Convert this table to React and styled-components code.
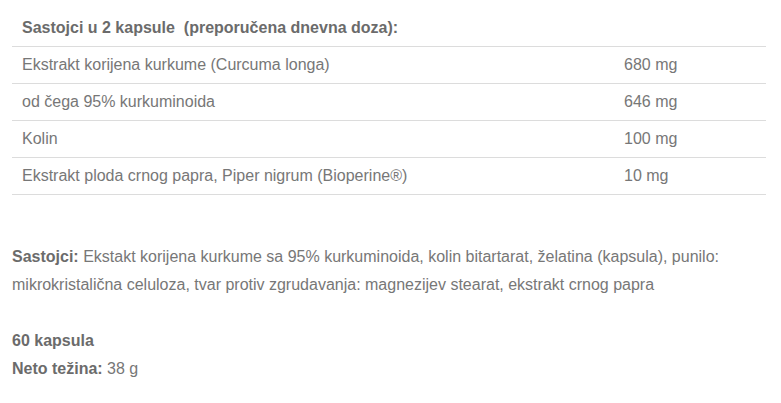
import styled, { createGlobalStyle } from "styled-components";

const GlobalStyle = createGlobalStyle`
  html, body {
    margin: 0;
    padding: 0;
    background: #fff;
  }
  body {
    font-family: "Liberation Sans", Arial, sans-serif;
    font-size: 16px;
    color: #777;
  }
`;

const Wrapper = styled.div`
  padding: 10px 15px 0 12px;
`;

const Table = styled.table`
  width: 754px;
  border-collapse: collapse;
  margin-bottom: 48px;
`;

const HeadCell = styled.th`
  text-align: left;
  font-weight: 700;
  color: #6b6b6b;
  padding: 0 10px;
  height: 36px;
  border-bottom: 1px solid #dcdcdc;
`;

const Cell = styled.td`
  padding: 0 10px;
  height: 36px;
  border-bottom: 1px solid #dcdcdc;
  width: ${(p) => (p.$value ? "132px" : "auto")};
`;

const Text = styled.p`
  margin: 0;
  line-height: 28px;
`;

const Label = styled.strong`
  color: #6b6b6b;
`;

const rows = [
  ["Ekstrakt korijena kurkume (Curcuma longa)", "680 mg"],
  ["od čega 95% kurkuminoida", "646 mg"],
  ["Kolin", "100 mg"],
  ["Ekstrakt ploda crnog papra, Piper nigrum (Bioperine®)", "10 mg"],
];

export default function App() {
  return (
    <>
      <GlobalStyle />
      <Wrapper>
        <Table>
          <thead>
            <tr>
              <HeadCell colSpan={2}>
                Sastojci u 2 kapsule&nbsp; (preporučena dnevna doza):
              </HeadCell>
            </tr>
          </thead>
          <tbody>
            {rows.map(([name, amount]) => (
              <tr key={name}>
                <Cell>{name}</Cell>
                <Cell $value>{amount}</Cell>
              </tr>
            ))}
          </tbody>
        </Table>
        <Text>
          <Label>Sastojci:</Label> Ekstakt korijena kurkume sa 95% kurkuminoida,
          kolin bitartarat, želatina (kapsula), punilo: mikrokristalična
          celuloza, tvar protiv zgrudavanja: magnezijev stearat, ekstrakt crnog
          papra
        </Text>
        <Text>&nbsp;</Text>
        <Text>
          <Label>60 kapsula</Label>
        </Text>
        <Text>
          <Label>Neto težina:</Label> 38 g
        </Text>
      </Wrapper>
    </>
  );
}
